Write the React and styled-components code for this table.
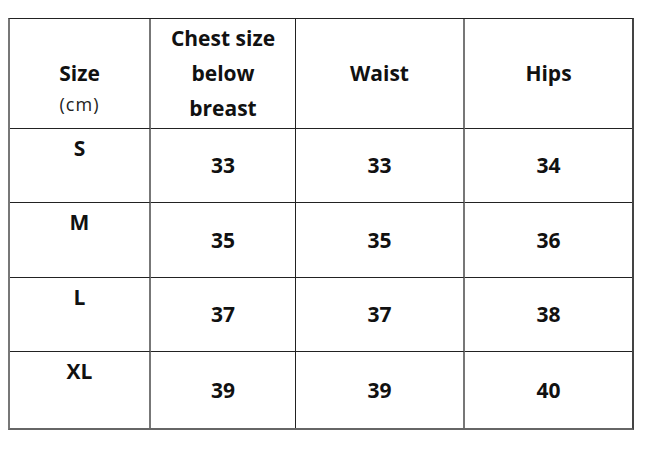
import React from 'react';
import styled, { createGlobalStyle } from 'styled-components';

const GlobalStyle = createGlobalStyle`
  html, body {
    margin: 0;
    padding: 0;
    background: #fff;
  }
  body {
    font-family: "Open Sans", "Liberation Sans", sans-serif;
    color: #111;
  }
`;

const Page = styled.div`
  padding: 18px 0 0 8px;
`;

const Grid = styled.div`
  display: grid;
  grid-template-columns: 141px 145px 169px 167px;
  grid-template-rows: 110px 74px 75px 74px 76px;
  width: max-content;
  border-top: 1px solid #222;
  border-left: 2px solid #777;
  border-right: 2px solid #444;
  border-bottom: 2px solid #666;
`;

const Cell = styled.div`
  display: flex;
  flex-direction: column;
  align-items: center;
  justify-content: ${({ pad }) => (pad ? 'flex-start' : 'center')};
  padding-top: ${({ pad }) => pad || 0}px;
  box-sizing: border-box;
  border-bottom: ${({ last }) => (last ? 'none' : '1px solid #222')};
  border-right: ${({ line }) =>
    line === 'gray' ? '2px solid #777' : line === 'dark' ? '1px solid #222' : 'none'};
  font-weight: 700;
  font-size: 21px;
  line-height: 35px;
  text-align: center;
`;

const Unit = styled.span`
  font-weight: 400;
  font-size: 18px;
  line-height: 26px;
  letter-spacing: 1px;
  color: #222;
`;

const lines = ['gray', 'dark', 'gray', null];

const rows = [
  ['S', 33, 33, 34],
  ['M', 35, 35, 36],
  ['L', 37, 37, 38],
  ['XL', 39, 39, 40],
];

export default function App() {
  return (
    <>
      <GlobalStyle />
      <Page>
        <Grid>
          <Cell line={lines[0]} pad={37}>
            <span>Size</span>
            <Unit>(cm)</Unit>
          </Cell>
          <Cell line={lines[1]}>
            <span>Chest size</span>
            <span>below</span>
            <span>breast</span>
          </Cell>
          <Cell line={lines[2]}>Waist</Cell>
          <Cell line={lines[3]}>Hips</Cell>
          {rows.map((row, r) =>
            row.map((value, c) => (
              <Cell
                key={`${r}-${c}`}
                line={lines[c]}
                pad={c === 0 ? 2 : 0}
                last={r === rows.length - 1}
              >
                {value}
              </Cell>
            ))
          )}
        </Grid>
      </Page>
    </>
  );
}
